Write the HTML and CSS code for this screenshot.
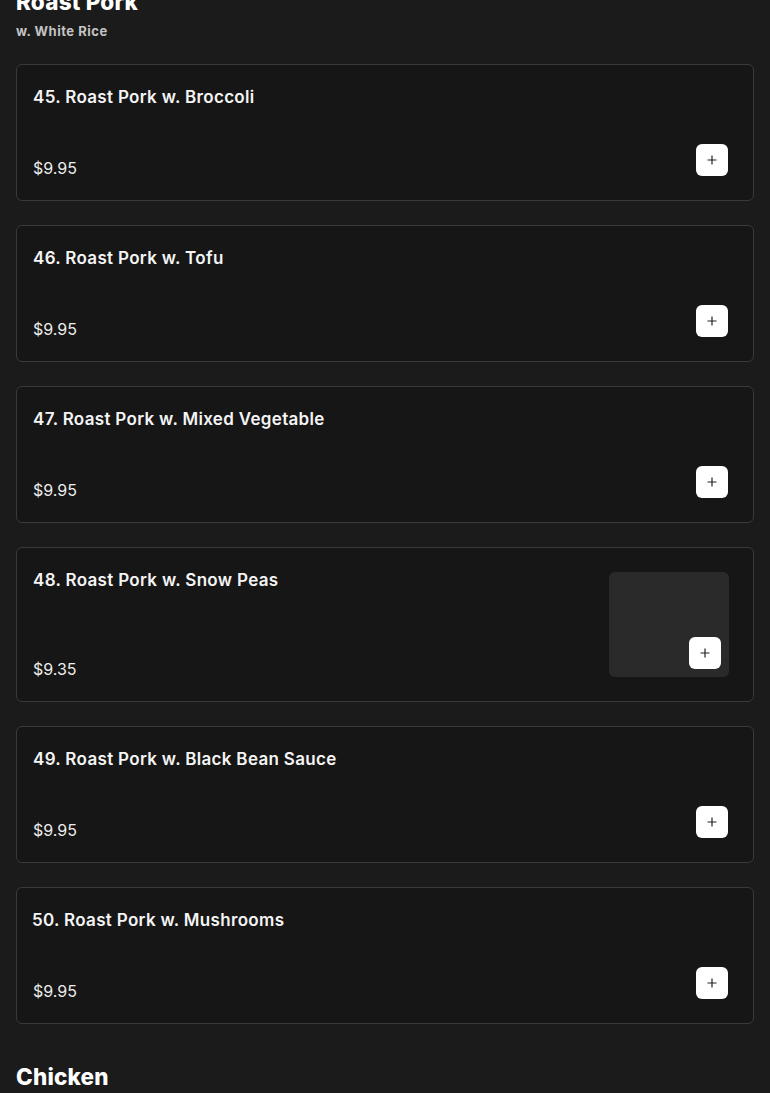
FILE: index.html
```html
<!DOCTYPE html>
<html>
<head>
<meta charset="utf-8">
<link rel="stylesheet" href="styles.css">
</head>
<body>
<main class="menu">
  <section class="category">
    <header class="cat-head">
      <h2 class="cat-title">Roast Pork</h2>
      <p class="cat-sub">w. White Rice</p>
    </header>
    <div class="items">
      <article class="card">
        <div class="info"><h3 class="name">45. Roast Pork w. Broccoli</h3><span class="price">$9.95</span></div>
        <button class="add"><svg viewBox="0 0 12 12" width="12" height="12"><path d="M6 1.5v9M1.5 6h9" stroke="#222" stroke-width="1.2" fill="none"/></svg></button>
      </article>
      <article class="card">
        <div class="info"><h3 class="name">46. Roast Pork w. Tofu</h3><span class="price">$9.95</span></div>
        <button class="add"><svg viewBox="0 0 12 12" width="12" height="12"><path d="M6 1.5v9M1.5 6h9" stroke="#222" stroke-width="1.2" fill="none"/></svg></button>
      </article>
      <article class="card">
        <div class="info"><h3 class="name">47. Roast Pork w. Mixed Vegetable</h3><span class="price">$9.95</span></div>
        <button class="add"><svg viewBox="0 0 12 12" width="12" height="12"><path d="M6 1.5v9M1.5 6h9" stroke="#222" stroke-width="1.2" fill="none"/></svg></button>
      </article>
      <article class="card has-img">
        <div class="info"><h3 class="name">48. Roast Pork w. Snow Peas</h3><span class="price">$9.35</span></div>
        <div class="thumb">
          <button class="add on-img"><svg viewBox="0 0 12 12" width="12" height="12"><path d="M6 1.5v9M1.5 6h9" stroke="#222" stroke-width="1.2" fill="none"/></svg></button>
        </div>
      </article>
      <article class="card">
        <div class="info"><h3 class="name">49. Roast Pork w. Black Bean Sauce</h3><span class="price">$9.95</span></div>
        <button class="add"><svg viewBox="0 0 12 12" width="12" height="12"><path d="M6 1.5v9M1.5 6h9" stroke="#222" stroke-width="1.2" fill="none"/></svg></button>
      </article>
      <article class="card">
        <div class="info"><h3 class="name name-tight">50. Roast Pork w. Mushrooms</h3><span class="price">$9.95</span></div>
        <button class="add"><svg viewBox="0 0 12 12" width="12" height="12"><path d="M6 1.5v9M1.5 6h9" stroke="#222" stroke-width="1.2" fill="none"/></svg></button>
      </article>
    </div>
  </section>
  <section class="category">
    <header class="cat-head">
      <h2 class="cat-title">Chicken</h2>
    </header>
  </section>
</main>
</body>
</html>
```
FILE: styles.css
```css
* { box-sizing: border-box; }
html, body { margin: 0; padding: 0; background: #1b1b1b; }
body { font-family: "Inter", "Noto Sans", sans-serif; color: #fff; overflow: hidden; }
.menu { padding: 0 16px; margin-top: -13px; }
.cat-head { margin-bottom: 24px; }
.cat-title { margin: 0; font-size: 22.5px; line-height: 30px; font-weight: 800; color: #fff; letter-spacing: 0.2px; }
.cat-sub { margin: 5px 0 0; font-size: 13px; line-height: 18px; font-weight: 700; color: #c4c4c4; letter-spacing: 0.5px; }
.items { display: flex; flex-direction: column; gap: 24px; margin-bottom: 38px; }
.card {
  display: flex; justify-content: space-between; align-items: flex-end;
  min-height: 137px; background: #161616; border: 1px solid #3a3a3a; border-radius: 6px;
  padding: 16px 25px 20px 16px;
}
.card.has-img { padding: 16px 24px 24px 16px; align-items: stretch; }
.info { display: flex; flex-direction: column; justify-content: space-between; align-self: stretch; }
.has-img .info { margin-bottom: -4px; }
.name { margin: 0; font-size: 17px; line-height: 32px; font-weight: 600; color: #f4f4f4; letter-spacing: 0.32px; }
.name-tight { margin-left: -1px; }
.price { font-size: 16px; line-height: 24px; font-weight: 400; color: #ececec; }
.add {
  width: 32px; height: 32px; border: none; border-radius: 6px; background: #fff;
  display: flex; align-items: center; justify-content: center; padding: 0; margin-bottom: 4px;
}
.thumb {
  width: 120px; height: 105px; margin-top: 8px; background: #2a2a2a; border-radius: 6px;
  display: flex; align-items: flex-end; justify-content: flex-end; padding: 8px;
}
.add.on-img { margin: 0; }
```
